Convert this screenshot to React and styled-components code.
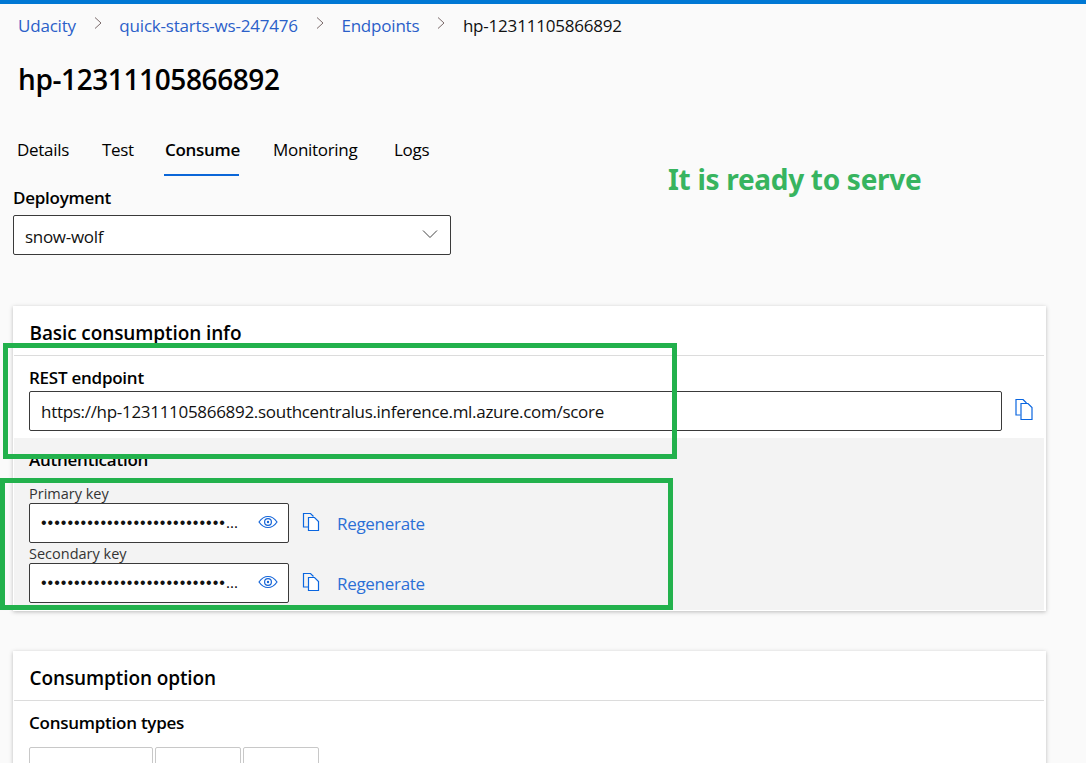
import React from 'react'
import styled, { createGlobalStyle } from 'styled-components'

const Global = createGlobalStyle`
  html, body { margin: 0; padding: 0; background: #fafafa; }
  body { font-family: "Open Sans", "Noto Sans", "Liberation Sans", sans-serif; color: #000; overflow: hidden; }
  * { box-sizing: border-box; }
`

const Page = styled.div`
  position: relative;
  width: 1086px;
  height: 763px;
  overflow: hidden;
  background: #fafafa;
  border-top: 4px solid #0078d4;
`
const Crumbs = styled.nav`
  display: flex;
  align-items: center;
  height: 42px;
  padding-left: 18px;
  font-size: 17px;
  letter-spacing: -0.2px;
`
const Crumb = styled.a`
  color: ${p => (p.$current ? '#111' : '#2b5fc9')};
`
const Sep = styled.span`
  display: flex;
  width: 43.5px;
  justify-content: center;
  svg { margin-top: -4px; }
`
const Title = styled.h1`
  margin: 13px 0 0 18px;
  font-size: 28px;
  line-height: 40px;
  font-weight: 600;
  letter-spacing: -0.4px;
`
const Tabs = styled.div`
  display: flex;
  gap: 33px;
  height: 39px;
  margin: 38px 0 0 16px;
`
const Tab = styled.div`
  width: ${p => p.$w}px;
  height: 39px;
  padding: 2px 0 0 1px;
  white-space: nowrap;
  font-size: 17px;
  line-height: 22px;
  letter-spacing: -0.3px;
  font-weight: ${p => (p.$active ? 600 : 400)};
  border-bottom: ${p => (p.$active ? '2px solid #0a66d8' : 'none')};
`
const Field = styled.div`
  margin: 11px 0 0 13px;
  width: 438px;
`
const Label = styled.div`
  font-size: 17px;
  line-height: 22px;
  font-weight: 600;
  letter-spacing: -0.25px;
  margin-bottom: ${p => p.$gap || 0}px;
`
const Box = styled.div`
  display: flex;
  align-items: center;
  height: 40px;
  background: #fff;
  border: 1px solid #3a3a3a;
  border-radius: 2px;
  padding: 0 10px 0 11px;
  font-size: 17px;
  letter-spacing: -0.3px;
  color: #111;
  width: ${p => p.$width || 'auto'};
`
const SelectBox = styled(Box)`
  justify-content: space-between;
  padding: 2px 12px 0 11px;
  svg { margin-top: -4px; }
`
const Card = styled.section`
  margin: ${p => p.$top}px 40px 0 13px;
  background: #fff;
  box-shadow: 0 1px 4px rgba(0, 0, 0, 0.25);
  padding-bottom: 1px;
`
const CardHead = styled.h2`
  margin: 0 2px 0 1px;
  height: 50px;
  padding: 14px 0 0 15.5px;
  font-size: 19px;
  line-height: 26px;
  font-weight: 600;
  letter-spacing: -0.1px;
  border-bottom: 1px solid #dcdcdc;
`
const Rest = styled.div`
  padding: 11px 0 7px 16px;
  height: 82px;
`
const Row = styled.div`
  display: flex;
  align-items: center;
`
const CopyBtn = styled.span`
  display: flex;
  margin-left: 12px;
  margin-top: -2px;
`
const AuthPanel = styled.div`
  margin: 0 2px 0 1px;
  background: #f3f3f3;
  padding: 11px 0 7px 15px;
  height: 172px;
`
const AuthTitle = styled(Label)`
  margin-bottom: 13px;
`
const SmallLabel = styled.div`
  font-size: 14.5px;
  line-height: 19px;
  color: #333;
`
const Dots = styled.div`
  white-space: nowrap;
  font-family: "Liberation Sans", sans-serif;
  font-size: 16px;
  letter-spacing: 1px;
  color: #111;
`
const Ellipsis = styled.span`
  letter-spacing: -0.5px;
`
const EyeBtn = styled.span`
  display: flex;
  margin: -2px 0 0 auto;
`
const Regen = styled.a`
  margin-left: 16px;
  color: #2b6fd6;
  font-size: 17px;
  letter-spacing: -0.3px;
`
const KeyBlock = styled.div`
  height: 60px;
`
const Types = styled.div`
  display: flex;
  gap: 2px;
  margin-top: 13px;
`
const TypeBtn = styled.div`
  height: 40px;
  width: ${p => p.$w}px;
  border: 1px solid #c8c8c8;
  border-radius: 2px;
`
const Mark = styled.div`
  position: absolute;
  border: 5px solid #22b14c;
  left: ${p => p.$x}px;
  top: ${p => p.$y}px;
  width: ${p => p.$w}px;
  height: ${p => p.$h}px;
`
const Note = styled.div`
  position: absolute;
  left: 668px;
  top: 157px;
  color: #37b45f;
  font-size: 28px;
  line-height: 36px;
  font-weight: 700;
  letter-spacing: -0.3px;
  font-family: "Noto Sans", sans-serif;
`

const Chevron = () => (
  <svg width="10" height="14" viewBox="0 0 10 14" fill="none" stroke="#7a6a6a" strokeWidth="1">
    <path d="M2 1.5 L8 7 L2 12.5" />
  </svg>
)
const Copy = ({ big }) => (
  <svg width="20" height="22" viewBox={big ? '-1.5 0 20 22' : '-2 -2 20 22'} fill="none" stroke="#0a66e0" strokeWidth="1.2">
    <path d={big ? 'M5 16 H.5 V.5 H7.5 L11 4' : 'M5 14 H.5 V.5 H7.5 L10.5 3.5'} />
    <path d={big ? 'M5.5 4.5 H12.5 L16.5 8.5 V20.5 H5.5 Z' : 'M5.5 4.5 H11.5 L15.5 8.5 V17.5 H5.5 Z'} fill="#fff" />
  </svg>
)
const Eye = () => (
  <svg width="20" height="14" viewBox="0 0 20 14" fill="none" stroke="#1565d8" strokeWidth="1.2">
    <path d="M1 7 C4 2.6 7 1.5 10 1.5 C13 1.5 16 2.6 19 7 C16 11.4 13 12.5 10 12.5 C7 12.5 4 11.4 1 7 Z" />
    <circle cx="10" cy="7" r="3.4" />
    <circle cx="10" cy="7" r="1.2" fill="#1565d8" stroke="none" />
  </svg>
)

const dots = '•'.repeat(28)

function KeyField({ label }) {
  return (
    <KeyBlock>
      <SmallLabel>{label}</SmallLabel>
      <Row>
        <Box $width="260px">
          <Dots>{dots}<Ellipsis>...</Ellipsis></Dots>
          <EyeBtn><Eye /></EyeBtn>
        </Box>
        <CopyBtn><Copy /></CopyBtn>
        <Regen>Regenerate</Regen>
      </Row>
    </KeyBlock>
  )
}

export default function App() {
  return (
    <Page>
      <Global />
      <Crumbs>
        <Crumb>Udacity</Crumb>
        <Sep><Chevron /></Sep>
        <Crumb>quick-starts-ws-247476</Crumb>
        <Sep><Chevron /></Sep>
        <Crumb>Endpoints</Crumb>
        <Sep><Chevron /></Sep>
        <Crumb $current>hp-12311105866892</Crumb>
      </Crumbs>
      <Title>hp-12311105866892</Title>
      <Tabs>
        <Tab $w={52}>Details</Tab>
        <Tab $w={30}>Test</Tab>
        <Tab $w={75} $active>Consume</Tab>
        <Tab $w={88}>Monitoring</Tab>
        <Tab $w={38}>Logs</Tab>
      </Tabs>
      <Field>
        <Label $gap={6}>Deployment</Label>
        <SelectBox>
          snow-wolf
          <svg width="16" height="10" viewBox="0 0 16 10" fill="none" stroke="#444" strokeWidth="1">
            <path d="M1 1.5 L8 8.5 L15 1.5" />
          </svg>
        </SelectBox>
      </Field>
      <Card $top={51}>
        <CardHead>Basic consumption info</CardHead>
        <Rest>
          <Label $gap={2}>REST endpoint</Label>
          <Row>
            <Box $width="973px">https://hp-12311105866892.southcentralus.inference.ml.azure.com/score</Box>
            <CopyBtn><Copy big /></CopyBtn>
          </Row>
        </Rest>
        <AuthPanel>
          <AuthTitle>Authentication</AuthTitle>
          <KeyField label="Primary key" />
          <KeyField label="Secondary key" />
        </AuthPanel>
      </Card>
      <Card $top={40}>
        <CardHead>Consumption option</CardHead>
        <Rest>
          <Label>Consumption types</Label>
          <Types>
            <TypeBtn $w={124} />
            <TypeBtn $w={86} />
            <TypeBtn $w={76} />
          </Types>
        </Rest>
      </Card>
      <Mark $x={3} $y={339} $w={674} $h={116} />
      <Mark $x={0} $y={474} $w={673} $h={132} />
      <Note>It is ready to serve</Note>
    </Page>
  )
}
